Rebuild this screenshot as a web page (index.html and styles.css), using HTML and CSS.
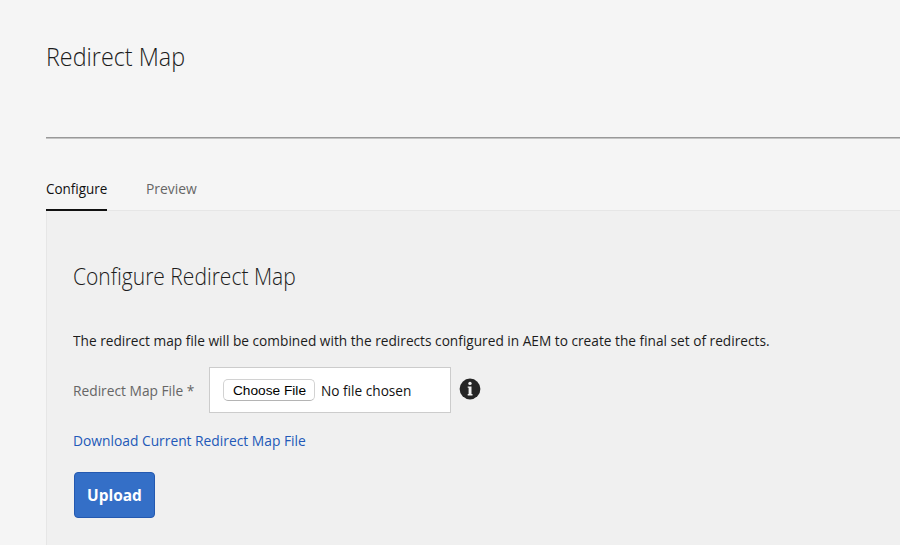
FILE: index.html
```html
<!DOCTYPE html>
<html lang="en">
<head>
<meta charset="utf-8">
<title>Redirect Map</title>
<link rel="stylesheet" href="styles.css">
</head>
<body>
<main class="page">
  <h1 class="title"><span class="t-title">Redirect Map</span></h1>
  <nav class="tabs">
    <a class="tab active"><span class="t-configure">Configure</span></a>
    <a class="tab"><span class="t-preview">Preview</span></a>
  </nav>
  <section class="panel">
    <h2 class="heading"><span class="t-heading">Configure Redirect Map</span></h2>
    <p class="description"><span class="t-description">The redirect map file will be combined with the redirects configured in AEM to create the final set of redirects.</span></p>
    <div class="field">
      <label class="label"><span class="t-label">Redirect Map File *</span></label>
      <div class="file-box">
        <button class="choose"><span class="t-choose">Choose File</span></button>
        <span class="file-name t-file">No file chosen</span>
      </div>
      <svg class="info" viewBox="0 0 22 22" aria-hidden="true"><circle cx="11" cy="11" r="10.4" fill="#262626"/><circle cx="11" cy="5.4" r="1.7" fill="#f0f0f0"/><path d="M8.7 8.4h3.8v7.7h1v1.3H8.7v-1.3h.9V9.7h-.9z" fill="#f0f0f0"/></svg>
    </div>
    <a class="download"><span class="t-download">Download Current Redirect Map File</span></a>
    <button class="upload"><span class="t-upload">Upload</span></button>
  </section>
</main>
</body>
</html>
```
FILE: styles.css
```css
* { box-sizing: border-box; }
body { margin: 0; height: 545px; overflow: hidden; background: #f5f5f5; color: #1c1c1c; font: 15px/20px "Open Sans", sans-serif; }
span { display: inline-block; white-space: nowrap; transform-origin: left center; }
.page { padding-left: 46px; }
.title { margin: 0; height: 139px; padding-top: 40px; border-bottom: 1px solid #c4c4c4; box-shadow: inset 0 -1px #999; font-size: 25px; line-height: 32px; font-weight: 300; }
.tabs { display: flex; gap: 39px; height: 72px; padding-top: 39px; }
.tab { height: 33px; color: #666; }
.active { width: 61px; color: #111; border-bottom: 2px solid #111; }
.panel { height: 335px; margin-top: -1px; padding: 49px 26px 0; background: #f0f0f0; border: 1px solid #e6e6e6; border-right: 0; border-bottom: 0; }
.heading { margin: 0; font-size: 23px; line-height: 32px; font-weight: 300; }
.description { margin: 38px 0 0; line-height: 20px; }
.field { display: flex; align-items: center; height: 46px; margin-top: 17px; }
.label { width: 136px; color: #666; }
.file-box { display: flex; align-items: center; width: 242px; height: 46px; padding-left: 13px; background: #fff; border: 1px solid #ccc; }
.choose { width: 92px; height: 22px; padding: 0; border: 1px solid #d2d2d2; border-bottom-color: #b4b4b4; border-radius: 5px; background: #fff; color: #000; font: 13.3px/18px "Liberation Sans", sans-serif; }
.file-name { margin-left: 6px; color: #111; }
.info { width: 22px; height: 22px; margin: 0 0 3px 8px; }
.download { display: block; margin-top: 17px; color: #2259b8; }
.upload { display: block; width: 81px; height: 46px; margin: 22px 0 0 1px; padding: 0; border: 1px solid #2459b0; border-radius: 4px; background: #346fc7; color: #fff; font: 700 16px/20px "Open Sans", sans-serif; }
.t-title { transform: scaleX(.933); }
.t-configure { transform: scaleX(.898); }
.t-preview { transform: scaleX(.925); }
.t-heading { transform: scaleX(.914); }
.t-description { transform: scaleX(.912); }
.t-label { transform: scaleX(.917); }
.t-file { transform: scaleX(.91); }
.t-download { transform: scaleX(.92); }
.t-choose { transform: scaleX(1.03) translateY(1px); transform-origin: center; }
.t-upload { transform: scaleX(.965); transform-origin: center; }
```
